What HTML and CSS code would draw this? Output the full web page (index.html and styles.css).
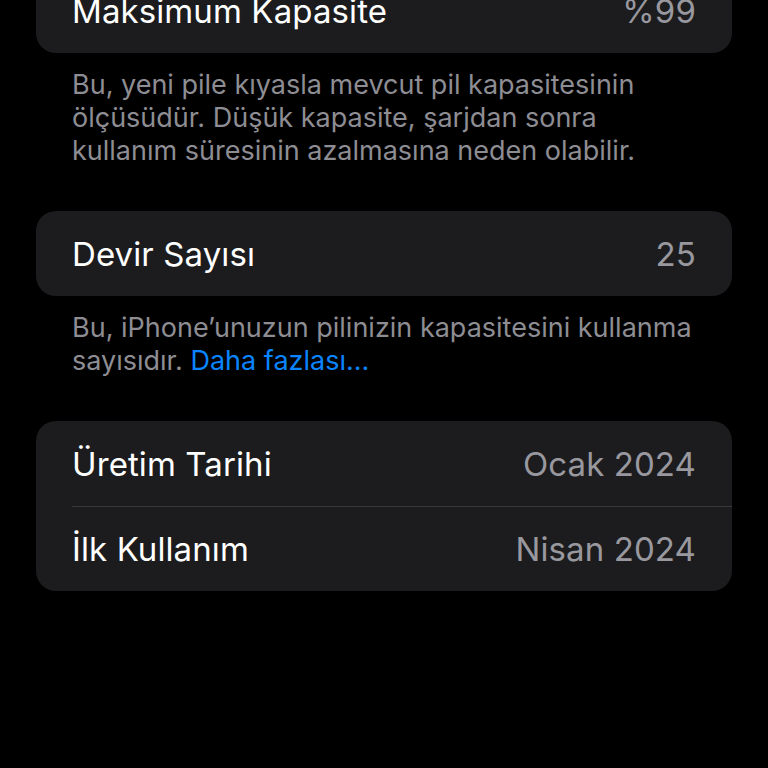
FILE: index.html
```html
<!DOCTYPE html>
<html lang="tr">
<head>
<meta charset="utf-8">
<link rel="stylesheet" href="styles.css">
</head>
<body>
<main class="page">
  <section class="group group-first">
    <div class="card">
      <div class="row"><span class="label">Maksimum Kapasite</span><span class="value">%99</span></div>
    </div>
    <p class="footer">Bu, yeni pile kıyasla mevcut pil kapasitesinin ölçüsüdür. Düşük kapasite, şarjdan sonra kullanım süresinin azalmasına neden olabilir.</p>
  </section>
  <section class="group">
    <div class="card">
      <div class="row"><span class="label">Devir Sayısı</span><span class="value">25</span></div>
    </div>
    <p class="footer">Bu, iPhone’unuzun pilinizin kapasitesini kullanma sayısıdır. <a class="link" href="#">Daha fazlası...</a></p>
  </section>
  <section class="group">
    <div class="card">
      <div class="row"><span class="label">Üretim Tarihi</span><span class="value">Ocak 2024</span></div>
      <div class="row"><span class="label">İlk Kullanım</span><span class="value">Nisan 2024</span></div>
    </div>
  </section>
</main>
</body>
</html>
```

FILE: styles.css
```css
html, body {
  margin: 0;
  padding: 0;
  background: #000;
}
body {
  font-family: Inter, Roboto, "Liberation Sans", sans-serif;
  color: #fff;
  overflow: hidden;
  height: 768px;
}
.page {
  padding: 0 36px;
  display: flex;
  flex-direction: column;
  gap: 44px;
}
.group-first {
  margin-top: -32px;
}
.card {
  background: #1c1c1e;
  border-radius: 20px;
  overflow: hidden;
}
.row {
  display: flex;
  justify-content: space-between;
  align-items: center;
  height: 85px;
  padding: 0 36px;
  font-size: 33px;
  letter-spacing: 0.1px;
  position: relative;
}
.row + .row::before {
  content: "";
  position: absolute;
  top: 0;
  left: 36px;
  right: 0;
  height: 1px;
  background: #38383a;
}
.label {
  color: #fff;
}
.value {
  color: #98989e;
}
.footer {
  margin: 15px 0 0;
  padding: 0 36px;
  font-size: 27px;
  line-height: 33px;
  color: #8d8d93;
  letter-spacing: 0;
}
.link {
  color: #0a84ff;
  text-decoration: none;
}
```
